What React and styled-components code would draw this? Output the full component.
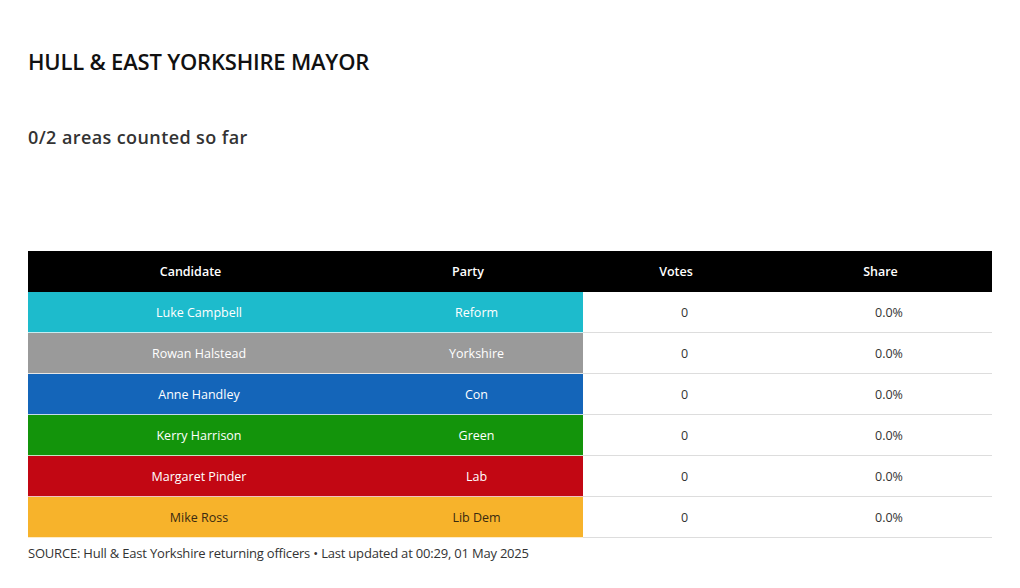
import React from "react";
import styled, { createGlobalStyle } from "styled-components";

const Global = createGlobalStyle`
  html, body { margin: 0; padding: 0; background: #fff; }
  body { font-family: "Open Sans", "Noto Sans", sans-serif; color: #333; }
`;

const Page = styled.div`
  padding: 47px 28px 0 28px;
  display: flex;
  flex-direction: column;
`;

const Title = styled.h1`
  margin: 0;
  font-size: 22px;
  line-height: 28px;
  font-weight: 600;
  color: #111;
  letter-spacing: -0.2px;
`;

const Subtitle = styled.h2`
  margin: 50px 0 0 0;
  font-size: 18px;
  line-height: 24px;
  font-weight: 600;
  color: #333;
  letter-spacing: 0.4px;
`;

const Table = styled.table`
  margin-top: 102px;
  width: 964px;
  border-collapse: collapse;
  table-layout: fixed;
  font-size: 12.5px;
`;

const HeadCell = styled.th`
  background: #000;
  color: #fff;
  font-weight: 600;
  height: 41px;
  padding: 0;
  text-align: center;
  width: ${(p) => p.$w}px;
`;

const Row = styled.tr``;

const Cell = styled.td`
  height: 40px;
  padding: 0 0 0 17px;
  text-align: center;
  background: ${(p) => p.$bg || "#fff"};
  color: ${(p) => p.$fg || "#333"};
  border-bottom: 1px solid ${(p) => (p.$bg ? "rgba(255,255,255,0.75)" : "#ddd")};
`;

const Footer = styled.p`
  margin: 6px 0 0 0;
  font-size: 13px;
  line-height: 18px;
  color: #333;
  letter-spacing: -0.2px;
`;

const rows = [
  { name: "Luke Campbell", party: "Reform", bg: "#1dbbcc", fg: "#fff" },
  { name: "Rowan Halstead", party: "Yorkshire", bg: "#9a9a9a", fg: "#fff" },
  { name: "Anne Handley", party: "Con", bg: "#1465b9", fg: "#fff" },
  { name: "Kerry Harrison", party: "Green", bg: "#13940b", fg: "#fff" },
  { name: "Margaret Pinder", party: "Lab", bg: "#c20713", fg: "#fff" },
  { name: "Mike Ross", party: "Lib Dem", bg: "#f7b32b", fg: "#3a2a10" },
];

export default function App() {
  return (
    <>
      <Global />
      <Page>
        <Title>HULL &amp; EAST YORKSHIRE MAYOR</Title>
        <Subtitle>0/2 areas counted so far</Subtitle>
        <Table>
          <thead>
            <tr>
              <HeadCell $w={325}>Candidate</HeadCell>
              <HeadCell $w={230}>Party</HeadCell>
              <HeadCell $w={186}>Votes</HeadCell>
              <HeadCell $w={223}>Share</HeadCell>
            </tr>
          </thead>
          <tbody>
            {rows.map((r) => (
              <Row key={r.name}>
                <Cell $bg={r.bg} $fg={r.fg}>{r.name}</Cell>
                <Cell $bg={r.bg} $fg={r.fg}>{r.party}</Cell>
                <Cell>0</Cell>
                <Cell>0.0%</Cell>
              </Row>
            ))}
          </tbody>
        </Table>
        <Footer>
          SOURCE: Hull &amp; East Yorkshire returning officers • Last updated at 00:29, 01 May 2025
        </Footer>
      </Page>
    </>
  );
}
